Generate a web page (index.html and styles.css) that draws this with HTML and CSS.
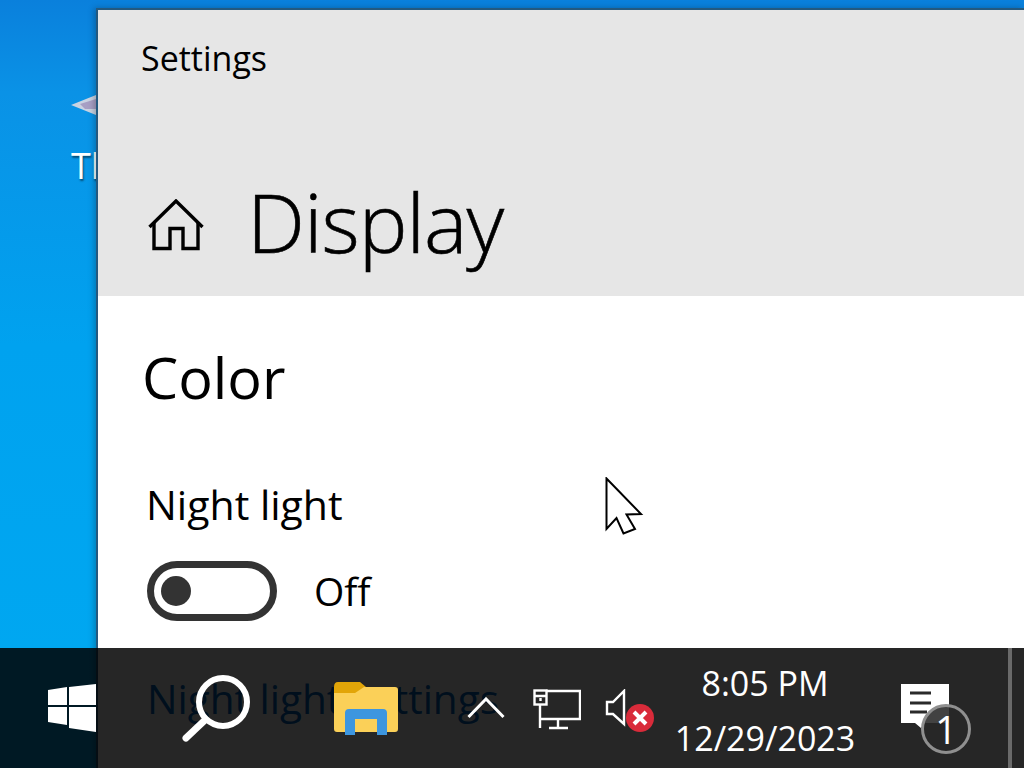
FILE: index.html
```html
<!DOCTYPE html>
<html lang="en">

<head>
  <meta charset="UTF-8">
  <title>Settings - Display</title>
  <link rel="stylesheet" href="styles.css">
</head>

<body>
  <!-- desktop icon, mostly hidden by the window -->
  <div class="desktop-icon">
    <svg class="desktop-icon-art" width="30" height="24" viewBox="0 0 30 24">
      <polygon points="0,10 25,0 30,0 30,20 25,20" fill="#c9d3e2" />
      <polygon points="9,9 25,4 28,14 14,14" fill="#a79fc4" />
    </svg>
    <div class="desktop-icon-label">This PC</div>
  </div>

  <div class="window">
    <div class="window-head">
      <div class="window-title">Settings</div>
      <div class="page-title">
        <svg class="home-icon" width="56" height="52" viewBox="0 0 56 52" fill="none" stroke="#000" stroke-width="3.4">
          <path d="M1.5 28 L28 2 L54.5 28" />
          <path d="M6 23.5 V49.5 H22 V29.5 H35 V49.5 H50 V23.5" />
        </svg>
        <h1>Display</h1>
      </div>
    </div>
    <div class="window-body">
      <h2>Color</h2>
      <div class="setting-label">Night light</div>
      <div class="toggle-row">
        <span class="toggle"><span class="toggle-knob"></span></span>
        <span class="toggle-text">Off</span>
      </div>
      <a class="setting-link">Night light settings</a>
    </div>
  </div>

  <svg class="cursor" width="40" height="60" viewBox="0 0 40 60">
    <polygon points="1.5,1.5 36,37 21.5,37.5 30,52 18.5,56.5 11.5,41 1.5,52" fill="#fff" stroke="#000" stroke-width="2" />
  </svg>

  <div class="taskbar">
    <div class="start-btn">
      <svg width="48" height="48" viewBox="0 0 48 48" fill="#fff">
        <polygon points="0,6 19,3 19,21 0,21" />
        <polygon points="21,3 48,0 48,21 21,21" />
        <polygon points="0,23 19,23 19,41 0,38" />
        <polygon points="21,23 48,23 48,48 21,44" />
      </svg>
    </div>
    <svg class="search-icon" width="70" height="70" viewBox="0 0 70 70" fill="none" stroke="#fff">
      <circle cx="41" cy="27" r="24" stroke-width="6" />
      <path d="M4 63 L22 46" stroke-width="7" stroke-linecap="round" />
    </svg>
    <svg class="folder-icon" width="64" height="54" viewBox="0 0 64 54">
      <path d="M0 6 Q0 1 4 1 H26 L32 6 V14 H0 Z" fill="#e2a508" />
      <path d="M0 12 H21 L30 6 H61 Q64 6 64 9 V48 Q64 51 61 51 H3 Q0 51 0 48 Z" fill="#fbd058" />
      <path d="M11 54 V32 Q11 28 15 28 H49 Q53 28 53 32 V54 H43 V38 H21 V54 Z" fill="#3d96df" />
    </svg>
    <svg class="chevron" width="38" height="22" viewBox="0 0 38 22" fill="none" stroke="#fff" stroke-width="3">
      <path d="M1.5 20 L19 2 L36.5 20" />
    </svg>
    <svg class="network-icon" width="48" height="42" viewBox="0 0 48 42" fill="none" stroke="#fff" stroke-width="2.4">
      <path d="M13 2 H47 V30 H7" />
      <rect x="1.5" y="1.5" width="12" height="14" />
      <path d="M7 15 V39 M16 39 H35 M25 30 V39" />
      <path d="M2 7 H13 M7.5 9 V12" />
    </svg>
    <svg class="volume-icon" width="50" height="46" viewBox="0 0 50 46">
      <path d="M2 13 H8 L19 2 V35 L8 25 H2 Z" fill="none" stroke="#fff" stroke-width="2.4" />
      <circle cx="35" cy="29" r="14" fill="#d92b3a" />
      <path d="M29 23 L41 35 M41 23 L29 35" stroke="#fff" stroke-width="4" />
    </svg>
    <div class="clock">
      <div>8:05 PM</div>
      <div>12/29/2023</div>
    </div>
    <div class="notify">
      <svg width="50" height="50" viewBox="0 0 50 50">
        <path d="M0 0 H48 V39 H24 L20 44 L14 39 H0 Z" fill="#fff" />
        <path d="M9 9 H30 M9 19 H30 M9 28 H26" stroke="#2a2a2a" stroke-width="3" />
      </svg>
      <span class="notify-badge">1</span>
    </div>
    <div class="show-desktop"></div>
  </div>
</body>

</html>
```

FILE: styles.css
```css
* {
  box-sizing: border-box;
}

html,
body {
  margin: 0;
  height: 768px;
  overflow: hidden;
}

body {
  position: relative;
  width: 1024px;
  font-family: 'Open Sans', 'Noto Sans', sans-serif;
  background: linear-gradient(180deg, #0a80dc 0%, #0a92e6 12%, #00a2ef 45%, #00a9f1 100%);
  color: #000;
}

.desktop-icon {
  position: absolute;
  left: 71px;
  top: 95px;
  color: #fff;
}

.desktop-icon-art {
  display: block;
  margin-bottom: 25px;
}

.desktop-icon-label {
  font-size: 36px;
  line-height: 44px;
  white-space: nowrap;
  text-shadow: 1px 2px 2px rgba(0, 0, 0, 0.5);
}

.window {
  position: absolute;
  left: 96px;
  top: 8px;
  width: 928px;
  height: 760px;
  overflow: hidden;
  border-left: 2px solid #24597f;
  border-top: 2px solid #24597f;
  background: #fff;
  box-shadow: -2px 0 6px rgba(0, 0, 0, 0.25);
}

.window-head {
  height: 286px;
  background: #e6e6e6;
  padding: 28px 0 0 43px;
}

.window-title {
  font-size: 34px;
  line-height: 40px;
}

.page-title {
  display: flex;
  align-items: center;
  margin-top: 88px;
  margin-left: 7px;
}

.home-icon {
  flex: none;
  margin-top: 8px;
  margin-right: 43px;
}

h1 {
  margin: 0;
  font-size: 82px;
  line-height: 110px;
  font-weight: 300;
  letter-spacing: -1px;
  -webkit-text-stroke: 0.6px #000;
}

.window-body {
  padding: 43px 0 0 49px;
}

h2 {
  margin: 0 0 0 -5px;
  font-size: 57.5px;
  line-height: 76px;
  font-weight: 400;
}

.setting-label {
  margin: 63px 0 0 -1px;
  font-size: 41px;
  line-height: 52px;
}

.toggle-row {
  display: flex;
  align-items: center;
  margin-top: 31px;
}

.toggle {
  display: flex;
  align-items: center;
  width: 130px;
  height: 60px;
  padding-left: 7px;
  border: 7px solid #333;
  border-radius: 30px;
}

.toggle-knob {
  width: 30px;
  height: 30px;
  border-radius: 50%;
  background: #333;
}

.toggle-text {
  margin-left: 37px;
  font-size: 39px;
  line-height: 52px;
}

.setting-link {
  display: block;
  margin-top: 54px;
  font-size: 40.5px;
  line-height: 48px;
  color: #0067c0;
}

.cursor {
  position: absolute;
  left: 605px;
  top: 477px;
}

.taskbar {
  position: absolute;
  left: 0;
  bottom: 0;
  display: flex;
  align-items: flex-start;
  width: 1024px;
  height: 120px;
  background: rgba(0, 0, 0, 0.85);
  color: #fff;
}

.start-btn {
  flex: none;
  padding: 36px 0 0 48px;
  width: 180px;
}

.search-icon {
  flex: none;
  margin: 27px 0 0 2px;
}

.folder-icon {
  flex: none;
  margin: 33px 0 0 82px;
}

.chevron {
  flex: none;
  margin: 49px 0 0 69px;
}

.network-icon {
  flex: none;
  margin: 41px 0 0 28px;
}

.volume-icon {
  flex: none;
  margin: 41px 0 0 24px;
}

.clock {
  flex: none;
  width: 190px;
  margin: 8px 0 0 15px;
  text-align: center;
  font-size: 34px;
  line-height: 55px;
}

.notify {
  position: relative;
  flex: none;
  width: 50px;
  margin: 36px 0 0 41px;
}

.notify svg {
  display: block;
}

.notify-badge {
  position: absolute;
  left: 20px;
  top: 20px;
  width: 50px;
  height: 50px;
  border: 3px solid #8f8f8f;
  border-radius: 50%;
  background: rgba(40, 40, 40, 0.88);
  font-size: 38px;
  line-height: 44px;
  text-align: center;
}

.show-desktop {
  flex: none;
  width: 4px;
  height: 120px;
  margin-left: 57px;
  background: #6a6a6a;
}
```
